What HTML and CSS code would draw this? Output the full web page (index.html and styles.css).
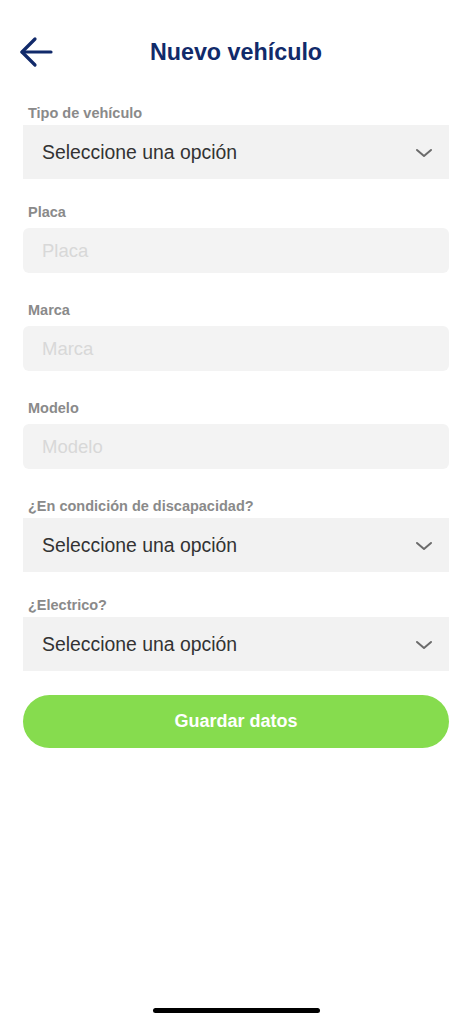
FILE: index.html
```html
<!DOCTYPE html>
<html lang="es">
<head>
    <meta charset="UTF-8">
    <meta name="viewport" content="width=device-width, initial-scale=1.0">
    <title>Nuevo vehículo</title>
    <link rel="stylesheet" href="styles.css">
</head>
<body>
    <div class="screen">
        <header class="topbar">
            <button type="button" class="back-btn" aria-label="Volver">
                <svg width="34" height="32" viewBox="0 0 34 32" fill="none" stroke="#112a6a" stroke-width="3.2" stroke-linecap="round" stroke-linejoin="round">
                    <path d="M32 16H3"/>
                    <path d="M16 3L3 16L16 29"/>
                </svg>
            </button>
            <h1>Nuevo vehículo</h1>
            <span></span>
        </header>

        <form class="vehicle-form">
            <div class="field">
                <label for="tipo">Tipo de vehículo</label>
                <div class="select-wrap">
                    <select id="tipo" name="tipo">
                        <option>Seleccione una opción</option>
                        <option>Automóvil</option>
                        <option>Motocicleta</option>
                    </select>
                    <svg class="chevron" width="18" height="10" viewBox="0 0 18 10" fill="none" stroke="#6b6b6b" stroke-width="2" stroke-linecap="round" stroke-linejoin="round">
                        <path d="M2 2L9 8L16 2"/>
                    </svg>
                </div>
            </div>

            <div class="field field-input">
                <label for="placa">Placa</label>
                <input type="text" id="placa" name="placa" placeholder="Placa">
            </div>

            <div class="field field-input">
                <label for="marca">Marca</label>
                <input type="text" id="marca" name="marca" placeholder="Marca">
            </div>

            <div class="field field-input">
                <label for="modelo">Modelo</label>
                <input type="text" id="modelo" name="modelo" placeholder="Modelo">
            </div>

            <div class="field">
                <label for="discapacidad">¿En condición de discapacidad?</label>
                <div class="select-wrap">
                    <select id="discapacidad" name="discapacidad">
                        <option>Seleccione una opción</option>
                        <option>Sí</option>
                        <option>No</option>
                    </select>
                    <svg class="chevron" width="18" height="10" viewBox="0 0 18 10" fill="none" stroke="#6b6b6b" stroke-width="2" stroke-linecap="round" stroke-linejoin="round">
                        <path d="M2 2L9 8L16 2"/>
                    </svg>
                </div>
            </div>

            <div class="field field-last">
                <label for="electrico">¿Electrico?</label>
                <div class="select-wrap">
                    <select id="electrico" name="electrico">
                        <option>Seleccione una opción</option>
                        <option>Sí</option>
                        <option>No</option>
                    </select>
                    <svg class="chevron" width="18" height="10" viewBox="0 0 18 10" fill="none" stroke="#6b6b6b" stroke-width="2" stroke-linecap="round" stroke-linejoin="round">
                        <path d="M2 2L9 8L16 2"/>
                    </svg>
                </div>
            </div>

            <button type="button" class="save-btn">Guardar datos</button>
        </form>

        <div class="home-indicator"></div>
    </div>
</body>
</html>
```

FILE: styles.css
```css
body {
    font-family: "Liberation Sans", Arial, sans-serif;
    margin: 0;
    padding: 0;
    background-color: #fff;
}

.screen {
    height: 1024px;
    display: flex;
    flex-direction: column;
}

.topbar {
    display: grid;
    grid-template-columns: 1fr auto 1fr;
    align-items: center;
    height: 60px;
    padding: 22px 19px 0 19px;
}

.back-btn {
    justify-self: start;
    display: flex;
    padding: 0;
    border: none;
    background: none;
    cursor: pointer;
}

.topbar h1 {
    margin: 0;
    font-size: 23.3px;
    font-weight: bold;
    color: #112a6a;
}

.vehicle-form {
    padding: 23px 23px 0 23px;
}

.field {
    margin-bottom: 25px;
}

.field label {
    display: block;
    padding-left: 5px;
    margin-bottom: 3px;
    font-size: 14.5px;
    line-height: 17px;
    font-weight: bold;
    color: #8a8a8a;
}

.field-input {
    margin-bottom: 29px;
}

.field-input label {
    margin-bottom: 7px;
}

.field-last {
    margin-bottom: 24px;
}

.select-wrap {
    position: relative;
}

.select-wrap select {
    display: block;
    width: 100%;
    height: 54px;
    padding: 0 50px 0 19px;
    border: none;
    border-radius: 0;
    background-color: #f2f2f2;
    font-family: inherit;
    font-size: 19.4px;
    color: #333;
    appearance: none;
    -webkit-appearance: none;
    outline: none;
}

.chevron {
    position: absolute;
    right: 16px;
    top: 23px;
    pointer-events: none;
}

.field input {
    display: block;
    box-sizing: border-box;
    width: 100%;
    height: 45px;
    padding: 0 19px;
    border: none;
    border-radius: 6px;
    background-color: #f3f3f3;
    font-family: inherit;
    font-size: 18.5px;
    color: #333;
    outline: none;
}

.field input::placeholder {
    color: #d8d8d8;
}

.save-btn {
    display: block;
    width: 100%;
    height: 53px;
    border: none;
    border-radius: 27px;
    background-color: #86dc4e;
    color: #fff;
    font-family: inherit;
    font-size: 18px;
    font-weight: bold;
    cursor: pointer;
}

.home-indicator {
    width: 167px;
    height: 5px;
    margin: auto auto 11px auto;
    border-radius: 3px;
    background-color: #000;
}
```
